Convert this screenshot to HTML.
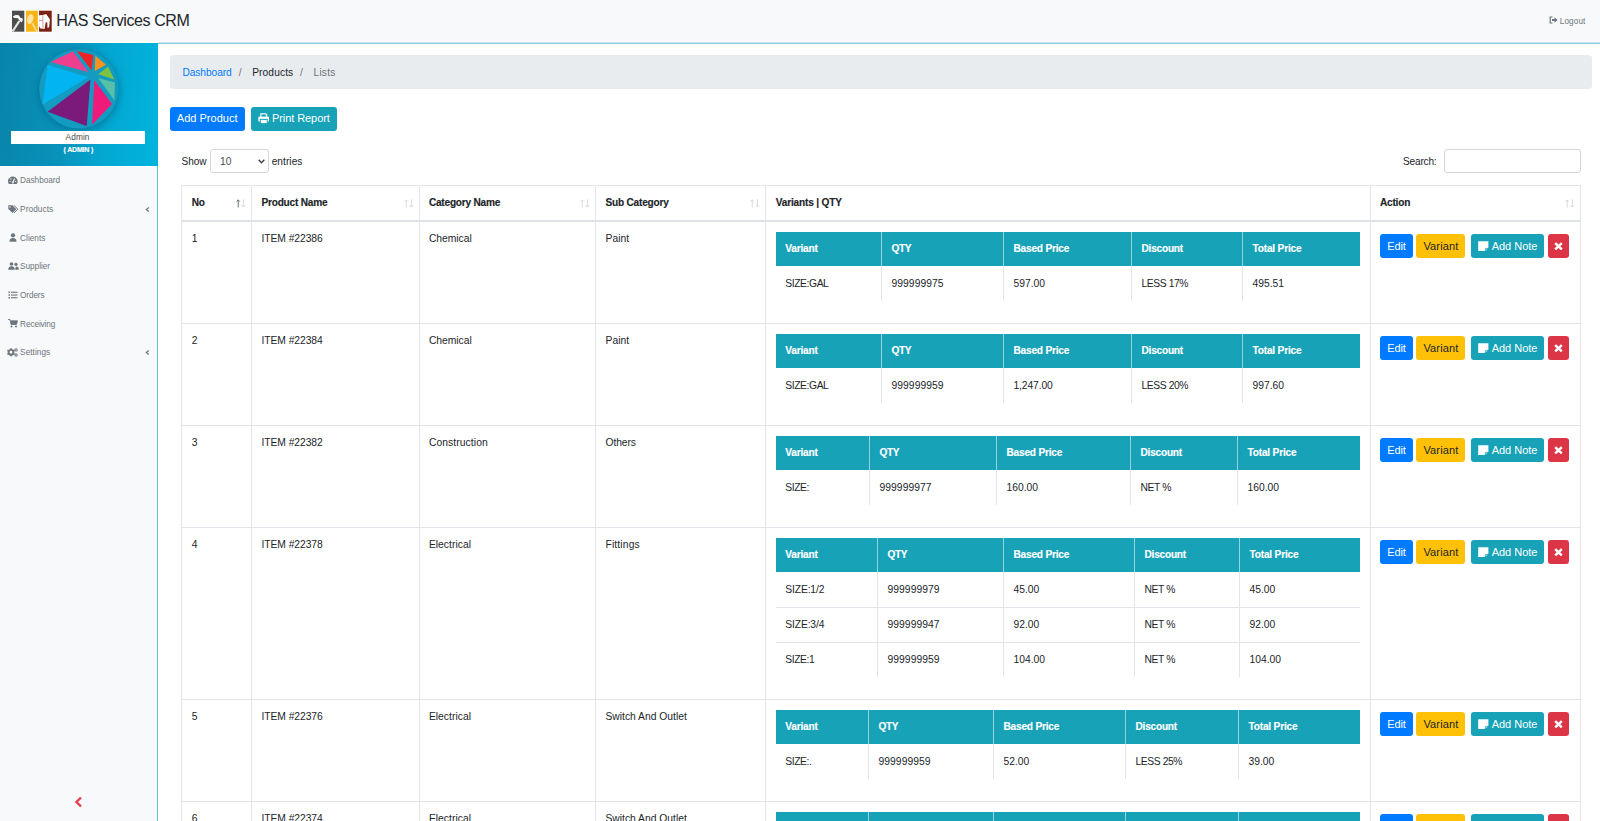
<!DOCTYPE html>
<html><head><meta charset="utf-8"><title>HAS Services CRM</title>
<style>
*{box-sizing:border-box;margin:0;padding:0}
html,body{width:1600px;height:821px;overflow:hidden;background:#fff;font-family:"Liberation Sans",sans-serif;color:#212529}
.abs{position:absolute}
.t{position:absolute;white-space:nowrap;line-height:1}
#hdr{position:absolute;left:0;top:0;width:1600px;height:41px;background:#f8f9fa}
#hline{position:absolute;left:158px;top:42px;width:1442px;height:2px;background:linear-gradient(#c2e5eb 0 50%,#8cd0dc 50% 100%)}
#side{position:absolute;left:0;top:43px;width:158px;height:778px;background:#f8f9fa;border-right:1px solid #5fc3d2}
#grad{position:absolute;left:0;top:43px;width:158px;height:123px;background:linear-gradient(95deg,#0884aa 0%,#0992ba 40%,#04a8d2 68%,#00b4dd 100%)}
.mi{position:absolute;left:8px}
.btn{position:absolute;height:24px;border-radius:3px}
.vl{position:absolute;width:1px;background:#e2e5e9}
.hl{position:absolute;height:1px;background:#e2e5e9}
.ih{position:absolute;height:34px;background:#17a2b8}
.ihd{position:absolute;width:1px;background:#9ad2db}
</style></head><body>

<div id="hdr"></div>
<svg class="abs" style="left:10px;top:9px" width="44" height="25" viewBox="0 0 1445 821" preserveAspectRatio="none">
<rect x="40" y="30" width="1355" height="740" fill="#ffffff"/>
<rect x="65" y="55" width="405" height="690" fill="#4d4d4d"/>
<rect x="525" y="55" width="390" height="690" fill="#f6b418"/>
<rect x="955" y="55" width="415" height="690" fill="#7b2115"/>
<path d="M95 235 L190 195 L290 205 L330 280 L425 320 L405 400 L375 445 L325 385 L255 305 L120 290 Z" fill="#fff"/>
<path d="M310 390 L85 735" stroke="#fff" stroke-width="70" opacity="0.85"/>
<ellipse cx="665" cy="330" rx="100" ry="165" transform="rotate(15 665 330)" fill="#fde3a6"/>
<path d="M735 470 L885 745" stroke="#fcd98c" stroke-width="60"/>
<path d="M955 205 L1085 200 L1185 165 L1310 340 L1285 600 L1230 625 L1225 450 L1175 430 L1135 655 L1000 640 L955 570 Z" fill="#fff"/>
<path d="M1080 205 L1080 640 M955 380 L1080 380" stroke="#c89c96" stroke-width="30"/>
</svg>
<div class="t" style="left:56.25px;top:13.00px;font-size:16.0px;color:#212529;letter-spacing:-0.400px;">HAS Services CRM</div>
<svg class="abs" style="left:1549px;top:16px" width="9" height="8" viewBox="0 0 9 8"><path d="M3.5 1 H1.2 V7 H3.5" fill="none" stroke="#6c757d" stroke-width="1.2"/><path d="M3 3 H5.5 V1.2 L8.6 4 L5.5 6.8 V5 H3 Z" fill="#6c757d"/></svg>
<div class="t" style="left:1559.80px;top:18.00px;font-size:8.2px;color:#6c757d;letter-spacing:0.109px;">Logout</div>
<div id="hline"></div>
<div id="side"></div>
<div id="grad"></div>
<div class="abs" style="left:0;top:166px;width:157px;height:1px;background:#fff"></div>
<svg class="abs" style="left:0;top:0" width="158" height="166" viewBox="0 0 158 166">
<defs><filter id="sh" x="-30%" y="-30%" width="160%" height="160%"><feGaussianBlur stdDeviation="3.5"/></filter></defs>
<circle cx="79" cy="90.5" r="41.5" fill="#04688a" opacity="0.55" filter="url(#sh)"/>
<circle cx="78.8" cy="88.8" r="39.6" fill="#139bc2"/>
<polygon fill="#ee3f8f" points="50.6,61.9 72.9,51.2 88.2,71.9"/>
<polygon fill="#ec2227" points="76.7,50.9 93.3,55.0 91.7,70.4"/>
<polygon fill="#f7941d" points="95.4,55.8 106.1,64.7 94.8,71.1"/>
<polygon fill="#7dc242" points="98.2,74.2 108.1,66.5 114.3,79.6"/>
<polygon fill="#56c0a8" points="98.2,78.0 115.0,82.6 114.3,100.3"/>
<polygon fill="#f01a7a" points="94.3,80.3 112.0,104.1 92.0,124.8"/>
<polygon fill="#7b1a7b" points="90.5,79.6 86.7,126.0 47.5,111.8"/>
<polygon fill="#03b4f3" points="47.5,65.0 88.2,77.3 42.6,104.6"/>
</svg>
<div class="abs" style="left:11px;top:131px;width:134px;height:12.5px;background:#fff"></div>
<div class="t" style="left:65.50px;top:133.00px;font-size:8.3px;color:#4a4a4a;letter-spacing:0.114px;">Admin</div>
<div class="t" style="left:63.60px;top:146.00px;font-size:7.0px;color:#fff;font-weight:bold;-webkit-text-stroke:0.15px #fff;letter-spacing:-0.195px;">( ADMIN )</div>
<svg class="mi" style="top:175.7px" width="10" height="8.5" viewBox="0 0 10 8.5"><path d="M1.1 8.2 A4.7 4.7 0 1 1 8.5 8.2 Z" fill="#6c757d"/><path d="M4.8 6.6 L6.6 2.6" stroke="#f8f9fa" stroke-width="1.1"/><circle cx="2.1" cy="5.3" r="0.65" fill="#f8f9fa"/><circle cx="2.9" cy="3" r="0.65" fill="#f8f9fa"/><circle cx="7.6" cy="5.3" r="0.65" fill="#f8f9fa"/><circle cx="4.8" cy="6.6" r="1" fill="#f8f9fa"/></svg>
<div class="t" style="left:20.10px;top:177.00px;font-size:8.25px;color:#6c757d;letter-spacing:-0.054px;">Dashboard</div>
<svg class="mi" style="top:204.6px" width="11" height="9" viewBox="0 0 11 9"><path d="M0.3 0.3 H4.5 L8.3 4.2 L4.5 8 L0.3 4 Z" fill="#6c757d"/><path d="M6 0.3 L9.8 4.2 L6 8" fill="none" stroke="#6c757d" stroke-width="1"/><circle cx="2" cy="2" r="0.7" fill="#f8f9fa"/></svg>
<div class="t" style="left:20.10px;top:206.00px;font-size:8.25px;color:#6c757d;letter-spacing:0.083px;">Products</div>
<svg class="abs" style="left:144.5px;top:207.0px" width="5" height="5" viewBox="0 0 5 5"><path d="M3.8 0.5 L1.3 2.5 L3.8 4.5" fill="none" stroke="#6c757d" stroke-width="1.2"/></svg>
<svg class="mi" style="top:233.1px;left:9px" width="8" height="9" viewBox="0 0 8 9"><circle cx="4" cy="2.3" r="2.1" fill="#6c757d"/><path d="M0.5 8.7 Q0.5 5 4 5 Q7.5 5 7.5 8.7 Z" fill="#6c757d"/></svg>
<div class="t" style="left:20.10px;top:235.00px;font-size:8.25px;color:#6c757d;">Clients</div>
<svg class="mi" style="top:262.0px" width="11" height="8" viewBox="0 0 11 8"><circle cx="3.5" cy="2" r="1.8" fill="#6c757d"/><circle cx="8" cy="2.3" r="1.6" fill="#6c757d"/><path d="M0.2 7.8 Q0.2 4.3 3.5 4.3 Q6.8 4.3 6.8 7.8 Z" fill="#6c757d"/><path d="M7.3 7.8 Q7.3 4.5 8.3 4.5 Q10.8 4.5 10.8 7.8 Z" fill="#6c757d"/></svg>
<div class="t" style="left:20.10px;top:263.00px;font-size:8.25px;color:#6c757d;letter-spacing:-0.059px;">Supplier</div>
<svg class="mi" style="top:291.0px" width="10" height="8" viewBox="0 0 10 8"><rect x="0.5" y="0.5" width="1.5" height="1.5" fill="#6c757d"/><rect x="0.5" y="3.3" width="1.5" height="1.5" fill="#6c757d"/><rect x="0.5" y="6" width="1.5" height="1.5" fill="#6c757d"/><rect x="3" y="0.7" width="6.5" height="1.1" fill="#6c757d"/><rect x="3" y="3.5" width="6.5" height="1.1" fill="#6c757d"/><rect x="3" y="6.2" width="6.5" height="1.1" fill="#6c757d"/></svg>
<div class="t" style="left:20.10px;top:292.00px;font-size:8.25px;color:#6c757d;letter-spacing:-0.142px;">Orders</div>
<svg class="mi" style="top:318.9px" width="10" height="9" viewBox="0 0 10 9"><path d="M0 0.5 H2 L3 5.5 H8.5 L9.5 1.8 H2.5" fill="#6c757d" stroke="#6c757d" stroke-width="0.8"/><circle cx="3.5" cy="7.5" r="1" fill="#6c757d"/><circle cx="8" cy="7.5" r="1" fill="#6c757d"/></svg>
<div class="t" style="left:20.10px;top:321.00px;font-size:8.25px;color:#6c757d;letter-spacing:-0.115px;">Receiving</div>
<svg class="mi" style="top:347.7px;left:7px" width="11" height="9" viewBox="0 0 11 9"><circle cx="4.0" cy="4.3" r="2.4" fill="none" stroke="#6c757d" stroke-width="1.9"/><rect x="3.20" y="6.80" width="1.6" height="1.6" fill="#6c757d" transform="rotate(0 4.00 7.60)"/><rect x="0.34" y="5.15" width="1.6" height="1.6" fill="#6c757d" transform="rotate(60 1.14 5.95)"/><rect x="0.34" y="1.85" width="1.6" height="1.6" fill="#6c757d" transform="rotate(120 1.14 2.65)"/><rect x="3.20" y="0.20" width="1.6" height="1.6" fill="#6c757d" transform="rotate(180 4.00 1.00)"/><rect x="6.06" y="1.85" width="1.6" height="1.6" fill="#6c757d" transform="rotate(240 6.86 2.65)"/><rect x="6.06" y="5.15" width="1.6" height="1.6" fill="#6c757d" transform="rotate(300 6.86 5.95)"/><circle cx="9.1" cy="1.9" r="1.15" fill="none" stroke="#6c757d" stroke-width="1.1"/><circle cx="9.1" cy="6.9" r="1.15" fill="none" stroke="#6c757d" stroke-width="1.1"/></svg>
<div class="t" style="left:20.10px;top:349.00px;font-size:8.25px;color:#6c757d;letter-spacing:0.037px;">Settings</div>
<svg class="abs" style="left:144.5px;top:350.0px" width="5" height="5" viewBox="0 0 5 5"><path d="M3.8 0.5 L1.3 2.5 L3.8 4.5" fill="none" stroke="#6c757d" stroke-width="1.2"/></svg>
<svg class="abs" style="left:74px;top:796px" width="9" height="12" viewBox="0 0 9 12"><path d="M7 1.5 L2.5 6 L7 10.5" fill="none" stroke="#e4414f" stroke-width="2.4"/></svg>
<div class="abs" style="left:170px;top:55px;width:1422px;height:34px;background:#e9ecef;border-radius:3.5px"></div>
<div class="t" style="left:182.40px;top:68.00px;font-size:10.2px;color:#007bff;letter-spacing:-0.059px;">Dashboard</div>
<div class="t" style="left:238.70px;top:68.00px;font-size:10.2px;color:#6c757d;letter-spacing:1.276px;">/</div>
<div class="t" style="left:252.20px;top:68.00px;font-size:10.2px;color:#212529;letter-spacing:0.111px;">Products</div>
<div class="t" style="left:300.00px;top:68.00px;font-size:10.2px;color:#6c757d;letter-spacing:1.276px;">/</div>
<div class="t" style="left:313.50px;top:68.00px;font-size:10.2px;color:#6c757d;letter-spacing:0.214px;">Lists</div>
<div class="btn" style="left:170px;top:107px;width:75px;background:#007bff"></div>
<div class="t" style="left:176.80px;top:113.00px;font-size:11.0px;color:#fff;letter-spacing:0.018px;">Add Product</div>
<div class="btn" style="left:251px;top:107px;width:86px;background:#17a2b8"></div>
<svg class="abs" style="left:257.8px;top:113px" width="11.5" height="11" viewBox="0 0 11.5 11"><path d="M2.3 0.3 H8 L9.2 1.5 V4 H2.3 Z" fill="#fff"/><rect x="0.3" y="3.6" width="10.9" height="5.2" rx="1.3" fill="#fff"/><rect x="2.3" y="6.4" width="6.9" height="4.3" fill="#fff" stroke="#17a2b8" stroke-width="1"/><rect x="3.4" y="1.4" width="4.4" height="2.2" fill="#17a2b8"/><rect x="3.3" y="7.5" width="4.9" height="2.5" fill="#fff"/></svg>
<div class="t" style="left:271.90px;top:113.00px;font-size:11.0px;color:#fff;letter-spacing:-0.064px;">Print Report</div>
<div class="t" style="left:181.60px;top:157.00px;font-size:10.1px;color:#212529;letter-spacing:-0.113px;">Show</div>
<div class="abs" style="left:209.5px;top:149px;width:59px;height:24px;border:1px solid #d3d8dd;border-radius:3px;background:#fff"></div>
<div class="t" style="left:220.00px;top:157.00px;font-size:10.3px;color:#495057;letter-spacing:0.099px;">10</div>
<svg class="abs" style="left:258px;top:158.5px" width="7" height="5" viewBox="0 0 7 5"><path d="M0.7 0.8 L3.5 3.8 L6.3 0.8" fill="none" stroke="#343a40" stroke-width="1.3"/></svg>
<div class="t" style="left:271.70px;top:157.00px;font-size:10.1px;color:#212529;letter-spacing:0.061px;">entries</div>
<div class="t" style="left:1403.10px;top:157.00px;font-size:10.1px;color:#212529;letter-spacing:-0.202px;">Search:</div>
<div class="abs" style="left:1443.5px;top:149px;width:137px;height:24px;border:1px solid #d3d8dd;border-radius:3px;background:#fff"></div>
<div class="hl" style="left:181px;top:185px;width:1400px"></div>
<div class="abs" style="left:181px;top:220px;width:1400px;height:2px;background:#dee2e6"></div>
<div class="vl" style="left:181px;top:185px;height:636px"></div>
<div class="vl" style="left:251px;top:185px;height:636px"></div>
<div class="vl" style="left:419px;top:185px;height:636px"></div>
<div class="vl" style="left:595px;top:185px;height:636px"></div>
<div class="vl" style="left:765px;top:185px;height:636px"></div>
<div class="vl" style="left:1370px;top:185px;height:636px"></div>
<div class="vl" style="left:1580px;top:185px;height:636px"></div>
<div class="hl" style="left:181px;top:323px;width:1400px"></div>
<div class="hl" style="left:181px;top:425px;width:1400px"></div>
<div class="hl" style="left:181px;top:527px;width:1400px"></div>
<div class="hl" style="left:181px;top:699px;width:1400px"></div>
<div class="hl" style="left:181px;top:801px;width:1400px"></div>
<div class="t" style="left:191.80px;top:198.00px;font-size:10.1px;color:#212529;font-weight:bold;-webkit-text-stroke:0.15px #212529;letter-spacing:-0.400px;">No</div>
<div class="t" style="left:261.50px;top:198.00px;font-size:10.1px;color:#212529;font-weight:bold;-webkit-text-stroke:0.15px #212529;letter-spacing:-0.218px;">Product Name</div>
<div class="t" style="left:428.90px;top:198.00px;font-size:10.1px;color:#212529;font-weight:bold;-webkit-text-stroke:0.15px #212529;letter-spacing:-0.216px;">Category Name</div>
<div class="t" style="left:605.50px;top:198.00px;font-size:10.1px;color:#212529;font-weight:bold;-webkit-text-stroke:0.15px #212529;letter-spacing:-0.209px;">Sub Category</div>
<div class="t" style="left:775.80px;top:198.00px;font-size:10.1px;color:#212529;font-weight:bold;-webkit-text-stroke:0.15px #212529;letter-spacing:-0.184px;">Variants | QTY</div>
<div class="t" style="left:1380.00px;top:198.00px;font-size:10.1px;color:#212529;font-weight:bold;-webkit-text-stroke:0.15px #212529;letter-spacing:-0.220px;">Action</div>
<svg class="abs" style="left:236px;top:199px" width="10" height="9" viewBox="0 0 10 9"><path d="M2.2 8.5 V1.0 M0.6 2.6 L2.2 0.8 L3.8 2.6" fill="none" stroke="#5f666c" stroke-width="0.9"/><path d="M7.4 0.3 V7.9 M5.8 6.2 L7.4 8.1 L9.0 6.2" fill="none" stroke="#d3d6d9" stroke-width="0.9"/></svg>
<svg class="abs" style="left:404px;top:199px" width="10" height="9" viewBox="0 0 10 9"><path d="M2.2 8.5 V1.0 M0.6 2.6 L2.2 0.8 L3.8 2.6" fill="none" stroke="#d3d6d9" stroke-width="0.9"/><path d="M7.4 0.3 V7.9 M5.8 6.2 L7.4 8.1 L9.0 6.2" fill="none" stroke="#d3d6d9" stroke-width="0.9"/></svg>
<svg class="abs" style="left:580px;top:199px" width="10" height="9" viewBox="0 0 10 9"><path d="M2.2 8.5 V1.0 M0.6 2.6 L2.2 0.8 L3.8 2.6" fill="none" stroke="#d3d6d9" stroke-width="0.9"/><path d="M7.4 0.3 V7.9 M5.8 6.2 L7.4 8.1 L9.0 6.2" fill="none" stroke="#d3d6d9" stroke-width="0.9"/></svg>
<svg class="abs" style="left:750px;top:199px" width="10" height="9" viewBox="0 0 10 9"><path d="M2.2 8.5 V1.0 M0.6 2.6 L2.2 0.8 L3.8 2.6" fill="none" stroke="#d3d6d9" stroke-width="0.9"/><path d="M7.4 0.3 V7.9 M5.8 6.2 L7.4 8.1 L9.0 6.2" fill="none" stroke="#d3d6d9" stroke-width="0.9"/></svg>
<svg class="abs" style="left:1565px;top:199px" width="10" height="9" viewBox="0 0 10 9"><path d="M2.2 8.5 V1.0 M0.6 2.6 L2.2 0.8 L3.8 2.6" fill="none" stroke="#d3d6d9" stroke-width="0.9"/><path d="M7.4 0.3 V7.9 M5.8 6.2 L7.4 8.1 L9.0 6.2" fill="none" stroke="#d3d6d9" stroke-width="0.9"/></svg>
<div class="t" style="left:191.80px;top:234.00px;font-size:10.3px;color:#212529;letter-spacing:0.049px;">1</div>
<div class="t" style="left:261.50px;top:234.00px;font-size:10.3px;color:#212529;letter-spacing:-0.057px;">ITEM #22386</div>
<div class="t" style="left:428.90px;top:234.00px;font-size:10.3px;color:#212529;letter-spacing:-0.012px;">Chemical</div>
<div class="t" style="left:605.50px;top:234.00px;font-size:10.3px;color:#212529;letter-spacing:0.040px;">Paint</div>
<div class="ih" style="left:776px;top:232px;width:584px"></div>
<div class="ihd" style="left:881px;top:232px;height:34px"></div>
<div class="vl" style="left:881px;top:266px;height:35px"></div>
<div class="ihd" style="left:1003px;top:232px;height:34px"></div>
<div class="vl" style="left:1003px;top:266px;height:35px"></div>
<div class="ihd" style="left:1131px;top:232px;height:34px"></div>
<div class="vl" style="left:1131px;top:266px;height:35px"></div>
<div class="ihd" style="left:1242px;top:232px;height:34px"></div>
<div class="vl" style="left:1242px;top:266px;height:35px"></div>
<div class="t" style="left:785.30px;top:244.00px;font-size:10.1px;color:#fff;font-weight:bold;-webkit-text-stroke:0.15px #fff;letter-spacing:-0.196px;">Variant</div>
<div class="t" style="left:891.50px;top:244.00px;font-size:10.1px;color:#fff;font-weight:bold;-webkit-text-stroke:0.15px #fff;letter-spacing:-0.363px;">QTY</div>
<div class="t" style="left:1013.50px;top:244.00px;font-size:10.1px;color:#fff;font-weight:bold;-webkit-text-stroke:0.15px #fff;letter-spacing:-0.202px;">Based Price</div>
<div class="t" style="left:1141.50px;top:244.00px;font-size:10.1px;color:#fff;font-weight:bold;-webkit-text-stroke:0.15px #fff;letter-spacing:-0.216px;">Discount</div>
<div class="t" style="left:1252.50px;top:244.00px;font-size:10.1px;color:#fff;font-weight:bold;-webkit-text-stroke:0.15px #fff;letter-spacing:-0.178px;">Total Price</div>
<div class="t" style="left:785.30px;top:279.00px;font-size:10.3px;color:#212529;letter-spacing:-0.400px;">SIZE:GAL</div>
<div class="t" style="left:891.50px;top:279.00px;font-size:10.3px;color:#212529;letter-spacing:0.055px;">999999975</div>
<div class="t" style="left:1013.50px;top:279.00px;font-size:10.3px;color:#212529;">597.00</div>
<div class="t" style="left:1141.50px;top:279.00px;font-size:10.3px;color:#212529;letter-spacing:-0.400px;">LESS 17%</div>
<div class="t" style="left:1252.50px;top:279.00px;font-size:10.3px;color:#212529;">495.51</div>
<div class="btn" style="left:1380px;top:234.4px;width:33px;background:#007bff"></div>
<div class="t" style="left:1387.20px;top:241.00px;font-size:11.0px;color:#fff;letter-spacing:-0.089px;">Edit</div>
<div class="btn" style="left:1416px;top:234.4px;width:49px;background:#ffc107"></div>
<div class="t" style="left:1423.40px;top:241.00px;font-size:11.0px;color:#212529;letter-spacing:0.158px;">Variant</div>
<div class="btn" style="left:1471.4px;top:234.4px;width:73px;background:#17a2b8"></div>
<svg class="abs" style="left:1478.2px;top:240.8px" width="10.6" height="10.4" viewBox="0 0 10.6 10.4"><path d="M0.2 0.2 H10.4 V6.8 L6.8 10.2 H0.2 Z" fill="#fff"/><path d="M10.2 7.4 H7.6 Q7.3 7.4 7.3 7.7 V10.2" fill="none" stroke="#17a2b8" stroke-width="0.8"/></svg>
<div class="t" style="left:1491.70px;top:241.00px;font-size:11.0px;color:#fff;letter-spacing:-0.020px;">Add Note</div>
<div class="btn" style="left:1548px;top:234.4px;width:21px;background:#dc3545"></div>
<svg class="abs" style="left:1554.2px;top:241.9px" width="9" height="8.5" viewBox="0 0 9 8.5"><path d="M1.2 1.1 L7.8 7.4 M7.8 1.1 L1.2 7.4" stroke="#fff" stroke-width="2.5"/></svg>
<div class="t" style="left:191.80px;top:336.00px;font-size:10.3px;color:#212529;letter-spacing:0.049px;">2</div>
<div class="t" style="left:261.50px;top:336.00px;font-size:10.3px;color:#212529;letter-spacing:-0.057px;">ITEM #22384</div>
<div class="t" style="left:428.90px;top:336.00px;font-size:10.3px;color:#212529;letter-spacing:-0.012px;">Chemical</div>
<div class="t" style="left:605.50px;top:336.00px;font-size:10.3px;color:#212529;letter-spacing:0.040px;">Paint</div>
<div class="ih" style="left:776px;top:334px;width:584px"></div>
<div class="ihd" style="left:881px;top:334px;height:34px"></div>
<div class="vl" style="left:881px;top:368px;height:35px"></div>
<div class="ihd" style="left:1003px;top:334px;height:34px"></div>
<div class="vl" style="left:1003px;top:368px;height:35px"></div>
<div class="ihd" style="left:1131px;top:334px;height:34px"></div>
<div class="vl" style="left:1131px;top:368px;height:35px"></div>
<div class="ihd" style="left:1242px;top:334px;height:34px"></div>
<div class="vl" style="left:1242px;top:368px;height:35px"></div>
<div class="t" style="left:785.30px;top:346.00px;font-size:10.1px;color:#fff;font-weight:bold;-webkit-text-stroke:0.15px #fff;letter-spacing:-0.196px;">Variant</div>
<div class="t" style="left:891.50px;top:346.00px;font-size:10.1px;color:#fff;font-weight:bold;-webkit-text-stroke:0.15px #fff;letter-spacing:-0.363px;">QTY</div>
<div class="t" style="left:1013.50px;top:346.00px;font-size:10.1px;color:#fff;font-weight:bold;-webkit-text-stroke:0.15px #fff;letter-spacing:-0.202px;">Based Price</div>
<div class="t" style="left:1141.50px;top:346.00px;font-size:10.1px;color:#fff;font-weight:bold;-webkit-text-stroke:0.15px #fff;letter-spacing:-0.216px;">Discount</div>
<div class="t" style="left:1252.50px;top:346.00px;font-size:10.1px;color:#fff;font-weight:bold;-webkit-text-stroke:0.15px #fff;letter-spacing:-0.178px;">Total Price</div>
<div class="t" style="left:785.30px;top:381.00px;font-size:10.3px;color:#212529;letter-spacing:-0.400px;">SIZE:GAL</div>
<div class="t" style="left:891.50px;top:381.00px;font-size:10.3px;color:#212529;letter-spacing:0.055px;">999999959</div>
<div class="t" style="left:1013.50px;top:381.00px;font-size:10.3px;color:#212529;letter-spacing:-0.114px;">1,247.00</div>
<div class="t" style="left:1141.50px;top:381.00px;font-size:10.3px;color:#212529;letter-spacing:-0.400px;">LESS 20%</div>
<div class="t" style="left:1252.50px;top:381.00px;font-size:10.3px;color:#212529;">997.60</div>
<div class="btn" style="left:1380px;top:336.4px;width:33px;background:#007bff"></div>
<div class="t" style="left:1387.20px;top:343.00px;font-size:11.0px;color:#fff;letter-spacing:-0.089px;">Edit</div>
<div class="btn" style="left:1416px;top:336.4px;width:49px;background:#ffc107"></div>
<div class="t" style="left:1423.40px;top:343.00px;font-size:11.0px;color:#212529;letter-spacing:0.158px;">Variant</div>
<div class="btn" style="left:1471.4px;top:336.4px;width:73px;background:#17a2b8"></div>
<svg class="abs" style="left:1478.2px;top:342.8px" width="10.6" height="10.4" viewBox="0 0 10.6 10.4"><path d="M0.2 0.2 H10.4 V6.8 L6.8 10.2 H0.2 Z" fill="#fff"/><path d="M10.2 7.4 H7.6 Q7.3 7.4 7.3 7.7 V10.2" fill="none" stroke="#17a2b8" stroke-width="0.8"/></svg>
<div class="t" style="left:1491.70px;top:343.00px;font-size:11.0px;color:#fff;letter-spacing:-0.020px;">Add Note</div>
<div class="btn" style="left:1548px;top:336.4px;width:21px;background:#dc3545"></div>
<svg class="abs" style="left:1554.2px;top:343.9px" width="9" height="8.5" viewBox="0 0 9 8.5"><path d="M1.2 1.1 L7.8 7.4 M7.8 1.1 L1.2 7.4" stroke="#fff" stroke-width="2.5"/></svg>
<div class="t" style="left:191.80px;top:438.00px;font-size:10.3px;color:#212529;letter-spacing:0.049px;">3</div>
<div class="t" style="left:261.50px;top:438.00px;font-size:10.3px;color:#212529;letter-spacing:-0.057px;">ITEM #22382</div>
<div class="t" style="left:428.90px;top:438.00px;font-size:10.3px;color:#212529;letter-spacing:0.096px;">Construction</div>
<div class="t" style="left:605.50px;top:438.00px;font-size:10.3px;color:#212529;letter-spacing:-0.111px;">Others</div>
<div class="ih" style="left:776px;top:436px;width:584px"></div>
<div class="ihd" style="left:869px;top:436px;height:34px"></div>
<div class="vl" style="left:869px;top:470px;height:35px"></div>
<div class="ihd" style="left:996px;top:436px;height:34px"></div>
<div class="vl" style="left:996px;top:470px;height:35px"></div>
<div class="ihd" style="left:1130px;top:436px;height:34px"></div>
<div class="vl" style="left:1130px;top:470px;height:35px"></div>
<div class="ihd" style="left:1237px;top:436px;height:34px"></div>
<div class="vl" style="left:1237px;top:470px;height:35px"></div>
<div class="t" style="left:785.30px;top:448.00px;font-size:10.1px;color:#fff;font-weight:bold;-webkit-text-stroke:0.15px #fff;letter-spacing:-0.196px;">Variant</div>
<div class="t" style="left:879.50px;top:448.00px;font-size:10.1px;color:#fff;font-weight:bold;-webkit-text-stroke:0.15px #fff;letter-spacing:-0.363px;">QTY</div>
<div class="t" style="left:1006.50px;top:448.00px;font-size:10.1px;color:#fff;font-weight:bold;-webkit-text-stroke:0.15px #fff;letter-spacing:-0.202px;">Based Price</div>
<div class="t" style="left:1140.50px;top:448.00px;font-size:10.1px;color:#fff;font-weight:bold;-webkit-text-stroke:0.15px #fff;letter-spacing:-0.216px;">Discount</div>
<div class="t" style="left:1247.50px;top:448.00px;font-size:10.1px;color:#fff;font-weight:bold;-webkit-text-stroke:0.15px #fff;letter-spacing:-0.178px;">Total Price</div>
<div class="t" style="left:785.30px;top:483.00px;font-size:10.3px;color:#212529;letter-spacing:-0.400px;">SIZE:</div>
<div class="t" style="left:879.50px;top:483.00px;font-size:10.3px;color:#212529;letter-spacing:0.055px;">999999977</div>
<div class="t" style="left:1006.50px;top:483.00px;font-size:10.3px;color:#212529;">160.00</div>
<div class="t" style="left:1140.50px;top:483.00px;font-size:10.3px;color:#212529;letter-spacing:-0.400px;">NET %</div>
<div class="t" style="left:1247.50px;top:483.00px;font-size:10.3px;color:#212529;">160.00</div>
<div class="btn" style="left:1380px;top:438.4px;width:33px;background:#007bff"></div>
<div class="t" style="left:1387.20px;top:445.00px;font-size:11.0px;color:#fff;letter-spacing:-0.089px;">Edit</div>
<div class="btn" style="left:1416px;top:438.4px;width:49px;background:#ffc107"></div>
<div class="t" style="left:1423.40px;top:445.00px;font-size:11.0px;color:#212529;letter-spacing:0.158px;">Variant</div>
<div class="btn" style="left:1471.4px;top:438.4px;width:73px;background:#17a2b8"></div>
<svg class="abs" style="left:1478.2px;top:444.8px" width="10.6" height="10.4" viewBox="0 0 10.6 10.4"><path d="M0.2 0.2 H10.4 V6.8 L6.8 10.2 H0.2 Z" fill="#fff"/><path d="M10.2 7.4 H7.6 Q7.3 7.4 7.3 7.7 V10.2" fill="none" stroke="#17a2b8" stroke-width="0.8"/></svg>
<div class="t" style="left:1491.70px;top:445.00px;font-size:11.0px;color:#fff;letter-spacing:-0.020px;">Add Note</div>
<div class="btn" style="left:1548px;top:438.4px;width:21px;background:#dc3545"></div>
<svg class="abs" style="left:1554.2px;top:445.9px" width="9" height="8.5" viewBox="0 0 9 8.5"><path d="M1.2 1.1 L7.8 7.4 M7.8 1.1 L1.2 7.4" stroke="#fff" stroke-width="2.5"/></svg>
<div class="t" style="left:191.80px;top:540.00px;font-size:10.3px;color:#212529;letter-spacing:0.049px;">4</div>
<div class="t" style="left:261.50px;top:540.00px;font-size:10.3px;color:#212529;letter-spacing:-0.057px;">ITEM #22378</div>
<div class="t" style="left:428.90px;top:540.00px;font-size:10.3px;color:#212529;letter-spacing:0.029px;">Electrical</div>
<div class="t" style="left:605.50px;top:540.00px;font-size:10.3px;color:#212529;letter-spacing:0.140px;">Fittings</div>
<div class="ih" style="left:776px;top:538px;width:584px"></div>
<div class="ihd" style="left:877px;top:538px;height:34px"></div>
<div class="vl" style="left:877px;top:572px;height:105px"></div>
<div class="ihd" style="left:1003px;top:538px;height:34px"></div>
<div class="vl" style="left:1003px;top:572px;height:105px"></div>
<div class="ihd" style="left:1134px;top:538px;height:34px"></div>
<div class="vl" style="left:1134px;top:572px;height:105px"></div>
<div class="ihd" style="left:1239px;top:538px;height:34px"></div>
<div class="vl" style="left:1239px;top:572px;height:105px"></div>
<div class="t" style="left:785.30px;top:550.00px;font-size:10.1px;color:#fff;font-weight:bold;-webkit-text-stroke:0.15px #fff;letter-spacing:-0.196px;">Variant</div>
<div class="t" style="left:887.50px;top:550.00px;font-size:10.1px;color:#fff;font-weight:bold;-webkit-text-stroke:0.15px #fff;letter-spacing:-0.363px;">QTY</div>
<div class="t" style="left:1013.50px;top:550.00px;font-size:10.1px;color:#fff;font-weight:bold;-webkit-text-stroke:0.15px #fff;letter-spacing:-0.202px;">Based Price</div>
<div class="t" style="left:1144.50px;top:550.00px;font-size:10.1px;color:#fff;font-weight:bold;-webkit-text-stroke:0.15px #fff;letter-spacing:-0.216px;">Discount</div>
<div class="t" style="left:1249.50px;top:550.00px;font-size:10.1px;color:#fff;font-weight:bold;-webkit-text-stroke:0.15px #fff;letter-spacing:-0.178px;">Total Price</div>
<div class="t" style="left:785.30px;top:585.00px;font-size:10.3px;color:#212529;letter-spacing:-0.136px;">SIZE:1/2</div>
<div class="t" style="left:887.50px;top:585.00px;font-size:10.3px;color:#212529;letter-spacing:0.055px;">999999979</div>
<div class="t" style="left:1013.50px;top:585.00px;font-size:10.3px;color:#212529;">45.00</div>
<div class="t" style="left:1144.50px;top:585.00px;font-size:10.3px;color:#212529;letter-spacing:-0.400px;">NET %</div>
<div class="t" style="left:1249.50px;top:585.00px;font-size:10.3px;color:#212529;">45.00</div>
<div class="hl" style="left:776px;top:607px;width:584px"></div>
<div class="t" style="left:785.30px;top:620.00px;font-size:10.3px;color:#212529;letter-spacing:-0.136px;">SIZE:3/4</div>
<div class="t" style="left:887.50px;top:620.00px;font-size:10.3px;color:#212529;letter-spacing:0.055px;">999999947</div>
<div class="t" style="left:1013.50px;top:620.00px;font-size:10.3px;color:#212529;">92.00</div>
<div class="t" style="left:1144.50px;top:620.00px;font-size:10.3px;color:#212529;letter-spacing:-0.400px;">NET %</div>
<div class="t" style="left:1249.50px;top:620.00px;font-size:10.3px;color:#212529;">92.00</div>
<div class="hl" style="left:776px;top:642px;width:584px"></div>
<div class="t" style="left:785.30px;top:655.00px;font-size:10.3px;color:#212529;letter-spacing:-0.400px;">SIZE:1</div>
<div class="t" style="left:887.50px;top:655.00px;font-size:10.3px;color:#212529;letter-spacing:0.055px;">999999959</div>
<div class="t" style="left:1013.50px;top:655.00px;font-size:10.3px;color:#212529;">104.00</div>
<div class="t" style="left:1144.50px;top:655.00px;font-size:10.3px;color:#212529;letter-spacing:-0.400px;">NET %</div>
<div class="t" style="left:1249.50px;top:655.00px;font-size:10.3px;color:#212529;">104.00</div>
<div class="btn" style="left:1380px;top:540.4px;width:33px;background:#007bff"></div>
<div class="t" style="left:1387.20px;top:547.00px;font-size:11.0px;color:#fff;letter-spacing:-0.089px;">Edit</div>
<div class="btn" style="left:1416px;top:540.4px;width:49px;background:#ffc107"></div>
<div class="t" style="left:1423.40px;top:547.00px;font-size:11.0px;color:#212529;letter-spacing:0.158px;">Variant</div>
<div class="btn" style="left:1471.4px;top:540.4px;width:73px;background:#17a2b8"></div>
<svg class="abs" style="left:1478.2px;top:546.8px" width="10.6" height="10.4" viewBox="0 0 10.6 10.4"><path d="M0.2 0.2 H10.4 V6.8 L6.8 10.2 H0.2 Z" fill="#fff"/><path d="M10.2 7.4 H7.6 Q7.3 7.4 7.3 7.7 V10.2" fill="none" stroke="#17a2b8" stroke-width="0.8"/></svg>
<div class="t" style="left:1491.70px;top:547.00px;font-size:11.0px;color:#fff;letter-spacing:-0.020px;">Add Note</div>
<div class="btn" style="left:1548px;top:540.4px;width:21px;background:#dc3545"></div>
<svg class="abs" style="left:1554.2px;top:547.9px" width="9" height="8.5" viewBox="0 0 9 8.5"><path d="M1.2 1.1 L7.8 7.4 M7.8 1.1 L1.2 7.4" stroke="#fff" stroke-width="2.5"/></svg>
<div class="t" style="left:191.80px;top:712.00px;font-size:10.3px;color:#212529;letter-spacing:0.049px;">5</div>
<div class="t" style="left:261.50px;top:712.00px;font-size:10.3px;color:#212529;letter-spacing:-0.057px;">ITEM #22376</div>
<div class="t" style="left:428.90px;top:712.00px;font-size:10.3px;color:#212529;letter-spacing:0.029px;">Electrical</div>
<div class="t" style="left:605.50px;top:712.00px;font-size:10.3px;color:#212529;">Switch And Outlet</div>
<div class="ih" style="left:776px;top:710px;width:584px"></div>
<div class="ihd" style="left:868px;top:710px;height:34px"></div>
<div class="vl" style="left:868px;top:744px;height:35px"></div>
<div class="ihd" style="left:993px;top:710px;height:34px"></div>
<div class="vl" style="left:993px;top:744px;height:35px"></div>
<div class="ihd" style="left:1125px;top:710px;height:34px"></div>
<div class="vl" style="left:1125px;top:744px;height:35px"></div>
<div class="ihd" style="left:1238px;top:710px;height:34px"></div>
<div class="vl" style="left:1238px;top:744px;height:35px"></div>
<div class="t" style="left:785.30px;top:722.00px;font-size:10.1px;color:#fff;font-weight:bold;-webkit-text-stroke:0.15px #fff;letter-spacing:-0.196px;">Variant</div>
<div class="t" style="left:878.50px;top:722.00px;font-size:10.1px;color:#fff;font-weight:bold;-webkit-text-stroke:0.15px #fff;letter-spacing:-0.363px;">QTY</div>
<div class="t" style="left:1003.50px;top:722.00px;font-size:10.1px;color:#fff;font-weight:bold;-webkit-text-stroke:0.15px #fff;letter-spacing:-0.202px;">Based Price</div>
<div class="t" style="left:1135.50px;top:722.00px;font-size:10.1px;color:#fff;font-weight:bold;-webkit-text-stroke:0.15px #fff;letter-spacing:-0.216px;">Discount</div>
<div class="t" style="left:1248.50px;top:722.00px;font-size:10.1px;color:#fff;font-weight:bold;-webkit-text-stroke:0.15px #fff;letter-spacing:-0.178px;">Total Price</div>
<div class="t" style="left:785.30px;top:757.00px;font-size:10.3px;color:#212529;letter-spacing:-0.400px;">SIZE:.</div>
<div class="t" style="left:878.50px;top:757.00px;font-size:10.3px;color:#212529;letter-spacing:0.055px;">999999959</div>
<div class="t" style="left:1003.50px;top:757.00px;font-size:10.3px;color:#212529;">52.00</div>
<div class="t" style="left:1135.50px;top:757.00px;font-size:10.3px;color:#212529;letter-spacing:-0.400px;">LESS 25%</div>
<div class="t" style="left:1248.50px;top:757.00px;font-size:10.3px;color:#212529;">39.00</div>
<div class="btn" style="left:1380px;top:712.4px;width:33px;background:#007bff"></div>
<div class="t" style="left:1387.20px;top:719.00px;font-size:11.0px;color:#fff;letter-spacing:-0.089px;">Edit</div>
<div class="btn" style="left:1416px;top:712.4px;width:49px;background:#ffc107"></div>
<div class="t" style="left:1423.40px;top:719.00px;font-size:11.0px;color:#212529;letter-spacing:0.158px;">Variant</div>
<div class="btn" style="left:1471.4px;top:712.4px;width:73px;background:#17a2b8"></div>
<svg class="abs" style="left:1478.2px;top:718.8px" width="10.6" height="10.4" viewBox="0 0 10.6 10.4"><path d="M0.2 0.2 H10.4 V6.8 L6.8 10.2 H0.2 Z" fill="#fff"/><path d="M10.2 7.4 H7.6 Q7.3 7.4 7.3 7.7 V10.2" fill="none" stroke="#17a2b8" stroke-width="0.8"/></svg>
<div class="t" style="left:1491.70px;top:719.00px;font-size:11.0px;color:#fff;letter-spacing:-0.020px;">Add Note</div>
<div class="btn" style="left:1548px;top:712.4px;width:21px;background:#dc3545"></div>
<svg class="abs" style="left:1554.2px;top:719.9px" width="9" height="8.5" viewBox="0 0 9 8.5"><path d="M1.2 1.1 L7.8 7.4 M7.8 1.1 L1.2 7.4" stroke="#fff" stroke-width="2.5"/></svg>
<div class="t" style="left:191.80px;top:814.00px;font-size:10.3px;color:#212529;letter-spacing:0.049px;">6</div>
<div class="t" style="left:261.50px;top:814.00px;font-size:10.3px;color:#212529;letter-spacing:-0.057px;">ITEM #22374</div>
<div class="t" style="left:428.90px;top:814.00px;font-size:10.3px;color:#212529;letter-spacing:0.029px;">Electrical</div>
<div class="t" style="left:605.50px;top:814.00px;font-size:10.3px;color:#212529;">Switch And Outlet</div>
<div class="ih" style="left:776px;top:812px;width:584px"></div>
<div class="ihd" style="left:868px;top:812px;height:34px"></div>
<div class="vl" style="left:868px;top:846px;height:35px"></div>
<div class="ihd" style="left:993px;top:812px;height:34px"></div>
<div class="vl" style="left:993px;top:846px;height:35px"></div>
<div class="ihd" style="left:1125px;top:812px;height:34px"></div>
<div class="vl" style="left:1125px;top:846px;height:35px"></div>
<div class="ihd" style="left:1238px;top:812px;height:34px"></div>
<div class="vl" style="left:1238px;top:846px;height:35px"></div>
<div class="t" style="left:785.30px;top:824.00px;font-size:10.1px;color:#fff;font-weight:bold;-webkit-text-stroke:0.15px #fff;letter-spacing:-0.196px;">Variant</div>
<div class="t" style="left:878.50px;top:824.00px;font-size:10.1px;color:#fff;font-weight:bold;-webkit-text-stroke:0.15px #fff;letter-spacing:-0.363px;">QTY</div>
<div class="t" style="left:1003.50px;top:824.00px;font-size:10.1px;color:#fff;font-weight:bold;-webkit-text-stroke:0.15px #fff;letter-spacing:-0.202px;">Based Price</div>
<div class="t" style="left:1135.50px;top:824.00px;font-size:10.1px;color:#fff;font-weight:bold;-webkit-text-stroke:0.15px #fff;letter-spacing:-0.216px;">Discount</div>
<div class="t" style="left:1248.50px;top:824.00px;font-size:10.1px;color:#fff;font-weight:bold;-webkit-text-stroke:0.15px #fff;letter-spacing:-0.178px;">Total Price</div>
<div class="t" style="left:785.30px;top:859.00px;font-size:10.3px;color:#212529;letter-spacing:-0.400px;">SIZE:.</div>
<div class="t" style="left:878.50px;top:859.00px;font-size:10.3px;color:#212529;letter-spacing:0.055px;">999999959</div>
<div class="t" style="left:1003.50px;top:859.00px;font-size:10.3px;color:#212529;">52.00</div>
<div class="t" style="left:1135.50px;top:859.00px;font-size:10.3px;color:#212529;letter-spacing:-0.400px;">LESS 25%</div>
<div class="t" style="left:1248.50px;top:859.00px;font-size:10.3px;color:#212529;">39.00</div>
<div class="btn" style="left:1380px;top:814.4px;width:33px;background:#007bff"></div>
<div class="t" style="left:1387.20px;top:821.00px;font-size:11.0px;color:#fff;letter-spacing:-0.089px;">Edit</div>
<div class="btn" style="left:1416px;top:814.4px;width:49px;background:#ffc107"></div>
<div class="t" style="left:1423.40px;top:821.00px;font-size:11.0px;color:#212529;letter-spacing:0.158px;">Variant</div>
<div class="btn" style="left:1471.4px;top:814.4px;width:73px;background:#17a2b8"></div>
<svg class="abs" style="left:1478.2px;top:820.8px" width="10.6" height="10.4" viewBox="0 0 10.6 10.4"><path d="M0.2 0.2 H10.4 V6.8 L6.8 10.2 H0.2 Z" fill="#fff"/><path d="M10.2 7.4 H7.6 Q7.3 7.4 7.3 7.7 V10.2" fill="none" stroke="#17a2b8" stroke-width="0.8"/></svg>
<div class="t" style="left:1491.70px;top:821.00px;font-size:11.0px;color:#fff;letter-spacing:-0.020px;">Add Note</div>
<div class="btn" style="left:1548px;top:814.4px;width:21px;background:#dc3545"></div>
<svg class="abs" style="left:1554.2px;top:821.9px" width="9" height="8.5" viewBox="0 0 9 8.5"><path d="M1.2 1.1 L7.8 7.4 M7.8 1.1 L1.2 7.4" stroke="#fff" stroke-width="2.5"/></svg>
</body></html>
